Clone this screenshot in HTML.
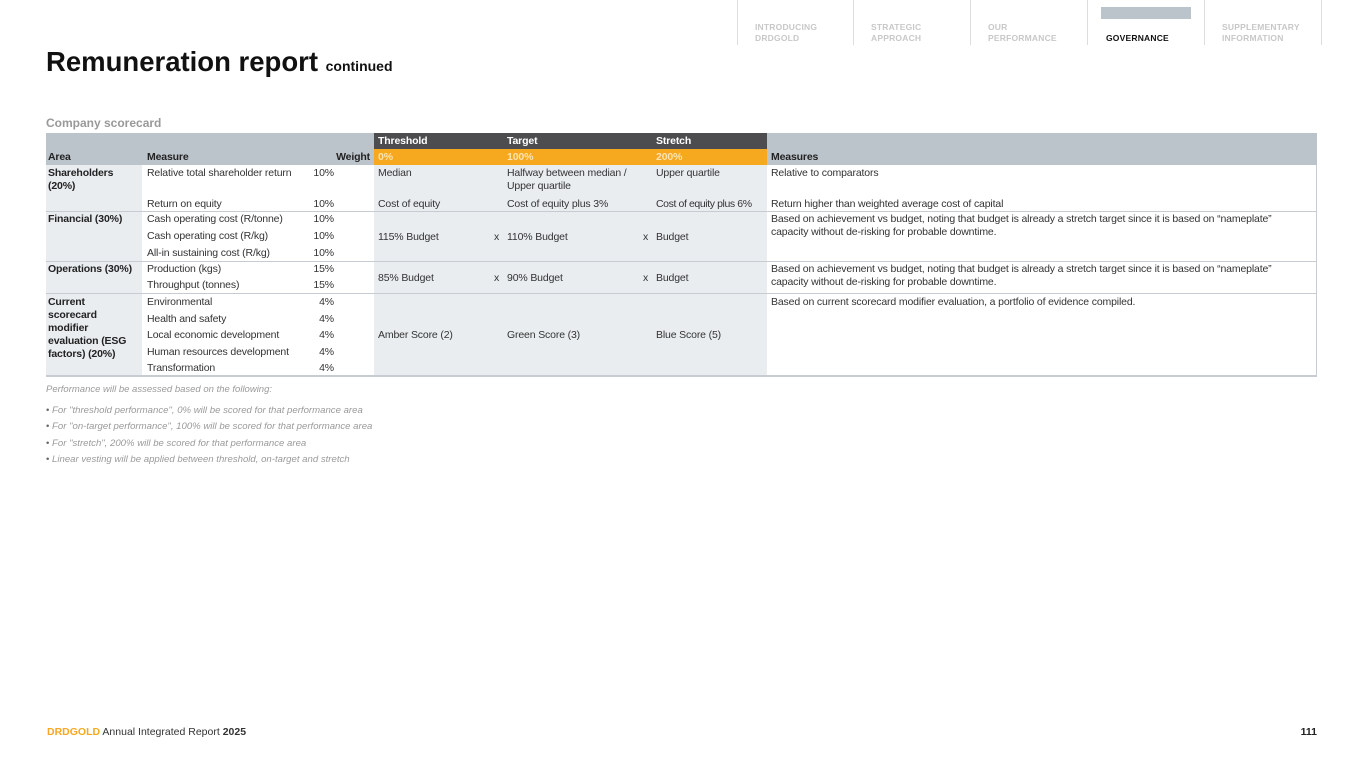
<!DOCTYPE html>
<html><head><meta charset="utf-8"><style>
*{margin:0;padding:0;box-sizing:border-box}
body{width:1365px;height:767px;background:#fff;position:relative;overflow:hidden;font-family:"Liberation Sans",sans-serif;color:#333}
.a{position:absolute;white-space:nowrap}
.t{font-size:10.5px;line-height:13px;letter-spacing:-0.15px;margin-top:1px}
.b{font-weight:bold}
.r{text-align:right}
.nav{position:absolute;top:0;height:45px;border-left:1px solid #ddd;font-size:8.5px;font-weight:bold;color:#c8c8c8;line-height:10.5px;padding:22px 0 0 17px;letter-spacing:0.2px}
.bg{position:absolute}
.hl{position:absolute;left:46px;width:1271px;height:1px;background:#c6ccd1}
</style></head><body>
<div class="nav" style="left:737px;width:117px">INTRODUCING<br>DRDGOLD</div>
<div class="nav" style="left:853px;width:117px">STRATEGIC<br>APPROACH</div>
<div class="nav" style="left:970px;width:117px">OUR<br>PERFORMANCE</div>
<div class="nav" style="left:1087px;width:117px;color:#111;padding-top:33px;padding-left:18px">GOVERNANCE</div>
<div class="bg" style="left:1101px;top:7px;width:90px;height:12px;background:#bcc4cb"></div>
<div class="nav" style="left:1204px;width:117px">SUPPLEMENTARY<br>INFORMATION</div>
<div class="bg" style="left:1321px;top:0;width:1px;height:45px;background:#ddd"></div>

<div class="a b" style="left:46px;top:44px;font-size:27.5px;line-height:36px;color:#111">Remuneration report <span style="font-size:14px">continued</span></div>

<div class="a b" style="left:46px;top:116px;font-size:12px;line-height:14px;color:#999">Company scorecard</div>

<div class="bg" style="left:46px;top:133px;width:1271px;height:32px;background:#bcc4cb"></div>
<div class="bg" style="left:374px;top:133px;width:393px;height:16px;background:#4d4d4f"></div>
<div class="bg" style="left:374px;top:149px;width:393px;height:16px;background:#f6a81e"></div>
<div class="bg" style="left:46px;top:165px;width:96px;height:211px;background:#e9edf0"></div>
<div class="bg" style="left:374px;top:165px;width:393px;height:211px;background:#e9edf0"></div>
<div class="bg" style="left:1316px;top:165px;width:1px;height:211px;background:#c6ccd1"></div>
<div class="hl" style="top:211px"></div>
<div class="hl" style="top:261px"></div>
<div class="hl" style="top:293px"></div>
<div class="hl" style="top:375px;height:2px"></div>

<div class="a t b" style="left:378px;top:134px;color:#fff">Threshold</div>
<div class="a t b" style="left:507px;top:134px;color:#fff">Target</div>
<div class="a t b" style="left:656px;top:134px;color:#fff">Stretch</div>
<div class="a t b" style="left:378px;top:150px;color:#fde3b0">0%</div>
<div class="a t b" style="left:507px;top:150px;color:#fde3b0">100%</div>
<div class="a t b" style="left:656px;top:150px;color:#fde3b0">200%</div>
<div class="a t b" style="left:48px;top:150px;color:#222">Area</div>
<div class="a t b" style="left:147px;top:150px;color:#222">Measure</div>
<div class="a t b r" style="left:300px;width:70px;top:150px;color:#222">Weight</div>
<div class="a t b" style="left:771px;top:150px;color:#222">Measures</div>

<div class="a t b" style="left:48px;top:166px;color:#222">Shareholders<br>(20%)</div>
<div class="a t" style="left:147px;top:166px">Relative total shareholder return</div>
<div class="a t r" style="left:300px;width:34px;top:166px">10%</div>
<div class="a t" style="left:378px;top:166px">Median</div>
<div class="a t" style="left:507px;top:166px">Halfway between median /<br>Upper quartile</div>
<div class="a t" style="left:656px;top:166px">Upper quartile</div>
<div class="a t" style="left:771px;top:166px">Relative to comparators</div>
<div class="a t" style="left:147px;top:197px">Return on equity</div>
<div class="a t r" style="left:300px;width:34px;top:197px">10%</div>
<div class="a t" style="left:378px;top:197px">Cost of equity</div>
<div class="a t" style="left:507px;top:197px">Cost of equity plus 3%</div>
<div class="a t" style="left:656px;top:197px;letter-spacing:-0.4px">Cost of equity plus 6%</div>
<div class="a t" style="left:771px;top:197px">Return higher than weighted average cost of capital</div>

<div class="a t b" style="left:48px;top:212px;color:#222">Financial (30%)</div>
<div class="a t" style="left:147px;top:212px">Cash operating cost (R/tonne)</div>
<div class="a t r" style="left:300px;width:34px;top:212px">10%</div>
<div class="a t" style="left:147px;top:229px">Cash operating cost (R/kg)</div>
<div class="a t r" style="left:300px;width:34px;top:229px">10%</div>
<div class="a t" style="left:147px;top:246px">All-in sustaining cost (R/kg)</div>
<div class="a t r" style="left:300px;width:34px;top:246px">10%</div>
<div class="a t" style="left:378px;top:230px">115% Budget</div>
<div class="a t" style="left:494px;top:230px">x</div>
<div class="a t" style="left:507px;top:230px">110% Budget</div>
<div class="a t" style="left:643px;top:230px">x</div>
<div class="a t" style="left:656px;top:230px">Budget</div>
<div class="a t" style="left:771px;top:212px">Based on achievement vs budget, noting that budget is already a stretch target since it is based on “nameplate”<br>capacity without de-risking for probable downtime.</div>

<div class="a t b" style="left:48px;top:262px;color:#222">Operations (30%)</div>
<div class="a t" style="left:147px;top:262px">Production (kgs)</div>
<div class="a t r" style="left:300px;width:34px;top:262px">15%</div>
<div class="a t" style="left:147px;top:278px">Throughput (tonnes)</div>
<div class="a t r" style="left:300px;width:34px;top:278px">15%</div>
<div class="a t" style="left:378px;top:271px">85% Budget</div>
<div class="a t" style="left:494px;top:271px">x</div>
<div class="a t" style="left:507px;top:271px">90% Budget</div>
<div class="a t" style="left:643px;top:271px">x</div>
<div class="a t" style="left:656px;top:271px">Budget</div>
<div class="a t" style="left:771px;top:262px">Based on achievement vs budget, noting that budget is already a stretch target since it is based on “nameplate”<br>capacity without de-risking for probable downtime.</div>

<div class="a t b" style="left:48px;top:295px;color:#222">Current<br>scorecard<br>modifier<br>evaluation (ESG<br>factors) (20%)</div>
<div class="a t" style="left:147px;top:295px">Environmental</div>
<div class="a t r" style="left:300px;width:34px;top:295px">4%</div>
<div class="a t" style="left:147px;top:312px">Health and safety</div>
<div class="a t r" style="left:300px;width:34px;top:312px">4%</div>
<div class="a t" style="left:147px;top:328px">Local economic development</div>
<div class="a t r" style="left:300px;width:34px;top:328px">4%</div>
<div class="a t" style="left:147px;top:345px">Human resources development</div>
<div class="a t r" style="left:300px;width:34px;top:345px">4%</div>
<div class="a t" style="left:147px;top:361px">Transformation</div>
<div class="a t r" style="left:300px;width:34px;top:361px">4%</div>
<div class="a t" style="left:378px;top:328px">Amber Score (2)</div>
<div class="a t" style="left:507px;top:328px">Green Score (3)</div>
<div class="a t" style="left:656px;top:328px">Blue Score (5)</div>
<div class="a t" style="left:771px;top:295px">Based on current scorecard modifier evaluation, a portfolio of evidence compiled.</div>

<div class="a" style="left:46px;top:384px;font-size:9.5px;line-height:12px;font-style:italic;color:#9a9a9a">Performance will be assessed based on the following:</div>
<div class="a" style="left:46px;top:403px;font-size:9.6px;line-height:16.3px;font-style:italic;color:#9a9a9a">
<span style="font-style:normal;color:#666">•</span> For "threshold performance", 0% will be scored for that performance area<br>
<span style="font-style:normal;color:#666">•</span> For "on-target performance", 100% will be scored for that performance area<br>
<span style="font-style:normal;color:#666">•</span> For "stretch", 200% will be scored for that performance area<br>
<span style="font-style:normal;color:#666">•</span> Linear vesting will be applied between threshold, on-target and stretch</div>

<div class="a" style="left:47px;top:726px;font-size:10.5px;line-height:13px;color:#333"><b style="color:#f6a81e">DRDGOLD</b> Annual Integrated Report <b>2025</b></div>
<div class="a b" style="left:1287px;width:30px;top:726px;font-size:10.5px;line-height:13px;text-align:right;color:#222">111</div>
</body></html>
